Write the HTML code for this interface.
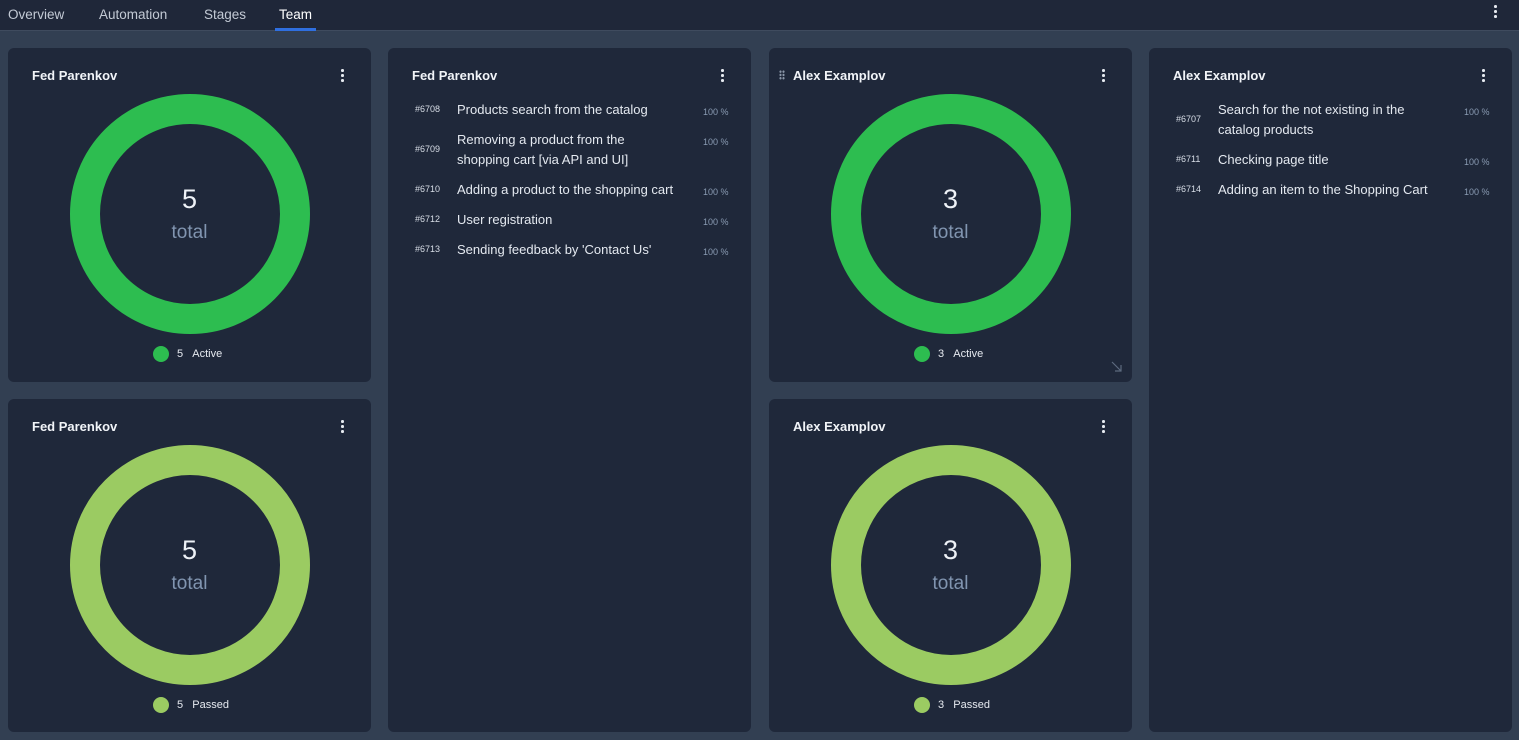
<!DOCTYPE html>
<html><head><style>
*{margin:0;padding:0;box-sizing:border-box}
body{width:1519px;height:740px;background:#323f52;font-family:"Liberation Sans",sans-serif;position:relative;overflow:hidden;color:#e8edf3}
.top{position:absolute;left:0;top:0;width:1519px;height:31px;background:#1f2739;border-bottom:1px solid #3f4b5e}
.tab{position:absolute;top:7px;font-size:13.5px;color:#c3cad5}
.ul{position:absolute;left:275px;top:28px;width:41px;height:3px;background:#2f6fe0}
.card{position:absolute;background:#1f283a;border-radius:6px}
.t{position:absolute;left:24px;top:20px;font-size:13px;font-weight:bold;color:#f1f4f8}
.dots{position:absolute;width:3px;top:21px}
.dots i{display:block;width:2.5px;height:2.5px;background:#e6eaf0;border-radius:50%;margin-bottom:2.5px}
svg.d{position:absolute;left:61px;top:46px}
.num{position:absolute;left:0;width:363px;text-align:center;font-size:27px;color:#eef2f7;top:136px}
.tot{position:absolute;left:0;width:363px;text-align:center;font-size:19px;color:#8195b0;top:174px}
.leg{position:absolute;top:298px;left:145px;font-size:11px;color:#e6eaf0;display:flex;align-items:center}
.leg b{display:inline-block;width:16px;height:16px;border-radius:50%;margin-right:8px}
.row{position:absolute;left:0;width:363px;font-size:13px;color:#e4e9f0;line-height:20px}
.row .id{position:absolute;left:27px;font-size:9px;color:#d8dee7;line-height:20px;top:-1px}
.row .tx{position:absolute;left:69px;width:228px}
.row .p{position:absolute;left:315px;font-size:9px;color:#8a9bb3;top:2px}
</style></head><body>
<div class="top">
<span class="tab" style="left:8px">Overview</span>
<span class="tab" style="left:99px">Automation</span>
<span class="tab" style="left:204px">Stages</span>
<span class="tab" style="left:279px;color:#fff">Team</span>
<div class="ul"></div>
<div class="dots" style="left:1494px;top:5px"><i></i><i></i><i></i></div>
</div>

<div class="card" style="left:8px;top:48px;width:363px;height:334px">
<div class="t">Fed Parenkov</div><div class="dots" style="left:333px"><i></i><i></i><i></i></div>
<svg class="d" width="242" height="242"><circle cx="121" cy="120" r="105" fill="none" stroke="#2dbd50" stroke-width="30"/></svg>
<div class="num">5</div><div class="tot">total</div>
<div class="leg"><b style="background:#2dbd50"></b>5&nbsp;&nbsp;&nbsp;Active</div>
</div>
<div class="card" style="left:8px;top:399px;width:363px;height:333px">
<div class="t">Fed Parenkov</div><div class="dots" style="left:333px"><i></i><i></i><i></i></div>
<svg class="d" width="242" height="242"><circle cx="121" cy="120" r="105" fill="none" stroke="#9bcb62" stroke-width="30"/></svg>
<div class="num">5</div><div class="tot">total</div>
<div class="leg"><b style="background:#9bcb62"></b>5&nbsp;&nbsp;&nbsp;Passed</div>
</div>

<div class="card" style="left:388px;top:48px;width:363px;height:684px">
<div class="t">Fed Parenkov</div><div class="dots" style="left:333px"><i></i><i></i><i></i></div>
<div class="row" style="top:52px"><span class="id">#6708</span><span class="tx">Products search from the catalog</span><span class="p">100 %</span></div>
<div class="row" style="top:82px"><span class="id" style="top:9px">#6709</span><span class="tx" style="width:200px">Removing a product from the shopping cart [via API and UI]</span><span class="p">100 %</span></div>
<div class="row" style="top:132px"><span class="id">#6710</span><span class="tx" style="width:250px">Adding a product to the shopping cart</span><span class="p">100 %</span></div>
<div class="row" style="top:162px"><span class="id">#6712</span><span class="tx">User registration</span><span class="p">100 %</span></div>
<div class="row" style="top:192px"><span class="id">#6713</span><span class="tx">Sending feedback by 'Contact Us'</span><span class="p">100 %</span></div>
</div>

<div class="card" style="left:769px;top:48px;width:363px;height:334px">
<div style="position:absolute;left:10px;top:22px;width:6px;height:10px;background:radial-gradient(circle,#8a96a8 1px,transparent 1.3px) 0 0/3px 3.3px"></div>
<div class="t">Alex Examplov</div><div class="dots" style="left:333px"><i></i><i></i><i></i></div>
<svg class="d" width="242" height="242"><circle cx="121" cy="120" r="105" fill="none" stroke="#2dbd50" stroke-width="30"/></svg>
<div class="num">3</div><div class="tot">total</div>
<div class="leg"><b style="background:#2dbd50"></b>3&nbsp;&nbsp;&nbsp;Active</div>
<svg style="position:absolute;left:342px;top:313px" width="12" height="12"><path d="M1 1L10 10M4 10H10V4" stroke="#5c6a7e" fill="none" stroke-width="1.2"/></svg>
</div>
<div class="card" style="left:769px;top:399px;width:363px;height:333px">
<div class="t">Alex Examplov</div><div class="dots" style="left:333px"><i></i><i></i><i></i></div>
<svg class="d" width="242" height="242"><circle cx="121" cy="120" r="105" fill="none" stroke="#9bcb62" stroke-width="30"/></svg>
<div class="num">3</div><div class="tot">total</div>
<div class="leg"><b style="background:#9bcb62"></b>3&nbsp;&nbsp;&nbsp;Passed</div>
</div>

<div class="card" style="left:1149px;top:48px;width:363px;height:684px">
<div class="t">Alex Examplov</div><div class="dots" style="left:333px"><i></i><i></i><i></i></div>
<div class="row" style="top:52px"><span class="id" style="top:9px">#6707</span><span class="tx" style="width:210px">Search for the not existing in the catalog products</span><span class="p">100 %</span></div>
<div class="row" style="top:102px"><span class="id">#6711</span><span class="tx">Checking page title</span><span class="p">100 %</span></div>
<div class="row" style="top:132px"><span class="id">#6714</span><span class="tx" style="width:250px">Adding an item to the Shopping Cart</span><span class="p">100 %</span></div>
</div>
</body></html>
